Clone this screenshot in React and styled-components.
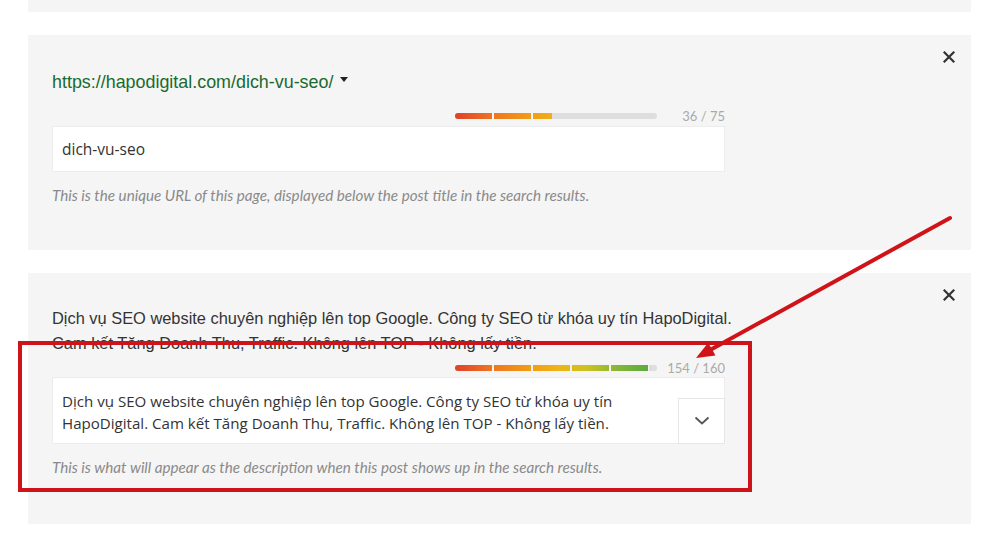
import React from 'react';
import styled, { createGlobalStyle } from 'styled-components';

const GlobalStyle = createGlobalStyle`
    html, body {
        margin: 0;
        padding: 0;
        background: #ffffff;
    }
    body {
        font-family: "Liberation Sans", Arial, sans-serif;
    }
`;

const TRACK = 202;

export default function App() {
    return (
        <Page>
            <GlobalStyle />
            <Stub />
            <Card $height={215}>
                <CloseButton aria-label="close">
                    <CloseIcon />
                </CloseButton>
                <UrlLine>
                    https://hapodigital.com/dich-vu-seo/
                    <Caret />
                </UrlLine>
                <ProgressRow $top={15}>
                    <Progress value={36} max={75} />
                    <Counter>36 / 75</Counter>
                </ProgressRow>
                <SlugInput defaultValue="dich-vu-seo" />
                <Help>This is the unique URL of this page, displayed below the post title in the search results.</Help>
            </Card>
            <Card $height={251}>
                <CloseButton aria-label="close">
                    <CloseIcon />
                </CloseButton>
                <Description>
                    Dịch vụ SEO website chuyên nghiệp lên top Google. Công ty SEO từ khóa uy tín HapoDigital.
                    <br />
                    Cam kết Tăng Doanh Thu, Traffic. Không lên TOP - Không lấy tiền.
                </Description>
                <ProgressRow $top={5}>
                    <Progress value={154} max={160} />
                    <Counter>154 / 160</Counter>
                </ProgressRow>
                <TextBox>
                    <TextBoxText>
                        Dịch vụ SEO website chuyên nghiệp lên top Google. Công ty SEO từ khóa uy tín
                        <br />
                        HapoDigital. Cam kết Tăng Doanh Thu, Traffic. Không lên TOP - Không lấy tiền.
                    </TextBoxText>
                    <ExpandButton aria-label="expand">
                        <svg width="16" height="10" viewBox="0 0 16 10">
                            <polyline points="1.5,1.5 8,7.5 14.5,1.5" fill="none" stroke="#555" strokeWidth="1.8" />
                        </svg>
                    </ExpandButton>
                </TextBox>
                <Help>This is what will appear as the description when this post shows up in the search results.</Help>
            </Card>

            {/* annotation on top of the screenshot */}
            <Highlight />
            <Arrow width="1000" height="541" viewBox="0 0 1000 541">
                <line x1="950" y1="218" x2="711" y2="349.5" stroke="#cf1318" strokeWidth="4" strokeLinecap="round" />
                <polygon points="696,358 715.5,355.6 708.2,342.8" fill="#cf1318" />
            </Arrow>
        </Page>
    );
}

function Progress({ value, max }) {
    const pct = Math.min(100, (value / max) * 100);
    return (
        <Track>
            <Fill style={{ width: `${pct}%` }} />
        </Track>
    );
}

function CloseIcon() {
    return (
        <svg width="12" height="12" viewBox="0 0 12 12">
            <path d="M1.5 1.5 L10.5 10.5 M10.5 1.5 L1.5 10.5" stroke="#333" strokeWidth="2.2" strokeLinecap="square" />
        </svg>
    );
}

const Page = styled.div`
    position: relative;
    width: 1000px;
    height: 541px;
    overflow: hidden;
    padding: 0 29px 0 28px;
    box-sizing: border-box;
    display: flex;
    flex-direction: column;
    gap: 23px;
`;

const Stub = styled.div`
    height: 12px;
    background: #f5f5f5;
`;

const Card = styled.section`
    position: relative;
    height: ${(p) => p.$height}px;
    box-sizing: border-box;
    background: #f5f5f5;
    padding: 33px 246px 0 24px;
    display: flex;
    flex-direction: column;
`;

const CloseButton = styled.button`
    position: absolute;
    top: 16px;
    right: 16px;
    width: 12px;
    height: 12px;
    padding: 0;
    border: none;
    background: none;
    display: flex;
    cursor: pointer;
`;

const UrlLine = styled.div`
    display: flex;
    align-items: center;
    gap: 7px;
    margin-top: 2px;
    height: 24px;
    font-size: 17.9px;
    color: #1a6a2c;
`;

const Caret = styled.span`
    width: 0;
    height: 0;
    border-left: 4px solid transparent;
    border-right: 4px solid transparent;
    border-top: 5px solid #222;
    margin-top: -5px;
`;

const ProgressRow = styled.div`
    display: flex;
    justify-content: flex-end;
    align-items: center;
    height: 14px;
    margin-top: ${(p) => p.$top}px;
`;

const Track = styled.div`
    width: ${TRACK}px;
    height: 6px;
    border-radius: 3px;
    background: #dedede;
    overflow: hidden;
`;

const Fill = styled.div`
    height: 100%;
    background:
        repeating-linear-gradient(to right, transparent 0 37px, #f5f5f5 37px 39px),
        linear-gradient(to right, #df4129 0%, #ee7420 18%, #f29a17 36%, #efb516 52%, #c9c122 66%, #87b636 80%, #4ca940 100%);
    background-size: ${TRACK}px 100%;
    background-repeat: no-repeat;
`;

const Counter = styled.span`
    width: 68px;
    text-align: right;
    font-family: Lato, "Liberation Sans", sans-serif;
    font-size: 13px;
    color: #aaaaaa;
`;

const SlugInput = styled.input`
    margin-top: 3px;
    height: 46px;
    box-sizing: border-box;
    width: 100%;
    border: 1px solid #ececec;
    background: #fff;
    padding: 0 9px;
    font-family: "Open Sans", sans-serif;
    font-size: 15.5px;
    color: #333;
    outline: none;
`;

const Help = styled.p`
    margin: 14px 0 0;
    font-family: Lato, "Liberation Sans", sans-serif;
    font-style: italic;
    font-size: 15.2px;
    line-height: 18px;
    color: #8a8a8a;
`;

const Description = styled.div`
    font-size: 16.4px;
    line-height: 25px;
    color: #333;
    white-space: nowrap;
`;

const TextBox = styled.div`
    margin-top: 2px;
    height: 67px;
    box-sizing: border-box;
    background: #fff;
    border: 1px solid #ececec;
    display: flex;
    justify-content: space-between;
    align-items: flex-end;
`;

const TextBoxText = styled.div`
    padding: 12px 9px 0;
    align-self: flex-start;
    font-family: "Open Sans", sans-serif;
    font-size: 15.1px;
    line-height: 22px;
    color: #333;
    white-space: nowrap;
`;

const ExpandButton = styled.button`
    width: 47px;
    height: 46px;
    margin: 0 -1px -1px 0;
    box-sizing: border-box;
    border: 1px solid #e6e6e6;
    background: #fff;
    padding: 0;
    display: flex;
    align-items: center;
    justify-content: center;
    cursor: pointer;
`;

const Highlight = styled.div`
    position: absolute;
    left: 18px;
    top: 341px;
    width: 734px;
    height: 151px;
    box-sizing: border-box;
    border: 4px solid #cc141a;
    pointer-events: none;
`;

const Arrow = styled.svg`
    position: absolute;
    left: 0;
    top: 0;
    pointer-events: none;
`;
